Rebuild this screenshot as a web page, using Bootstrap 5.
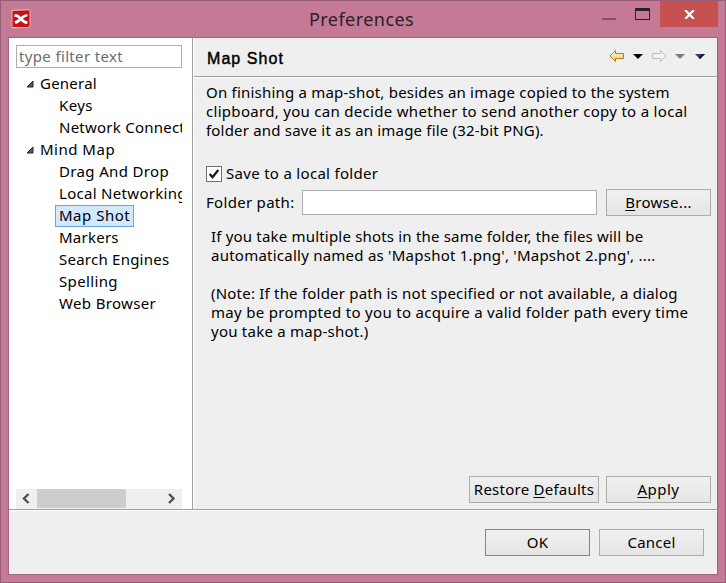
<!DOCTYPE html>
<html lang="en">
<head>
<meta charset="utf-8">
<meta name="viewport" content="width=device-width, initial-scale=1">
<title>Preferences</title>
<link rel="stylesheet" href="https://cdn.jsdelivr.net/npm/bootstrap@5.3.0/dist/css/bootstrap.min.css">
<style>
  body{font:15px/19px "Noto Sans","Open Sans",sans-serif;color:#000;letter-spacing:.24px}
  svg{display:block;flex:none}
  .window{width:726px;height:583px;background:#c47a96;border:1px solid #995c75;padding:0 7px 7px}
  .titlebar{height:36px}
  .app-icon{margin:8px 0 0 3px}
  .caption-text{font-size:18px;line-height:24px;letter-spacing:.45px;color:#2b2228;margin-top:6px;width:108px}
  .sys-buttons{width:125px}
  .close-btn{width:58px;height:26px;background:#c75050;border:0}
  .client{border:1px solid #a3637c;background:#efefef}
  .side{width:184px;background:#fff;border-right:1px solid #a0a0a0;padding:7px 10px 0 7px}
  .filter{height:23px;border:1px solid #abadb3;padding:0 2px;line-height:20px;letter-spacing:.35px;color:#6d6d6d;background:#fff}
  .tree{margin-top:5px}
  .node{height:22px;line-height:20px;white-space:nowrap}
  .node.branch{padding-bottom:2px}
  .twisty{margin:1px 6px 0 10px}
  .leaf{margin-left:39px;padding:0 3px;border:1px solid transparent;line-height:18px;height:22px}
  .leaf.current{background:#d1e8ff;border-color:#66a7e8}
  .scroller{height:20px;background:#efefef}
  .thumb{width:89px;height:19px;background:#cdcdcd}
  .pane{border-left:1px solid #fff}
  .pane-head{height:39px;border-bottom:1px solid #a0a0a0;box-shadow:0 1px #fff;padding:0 11px 0 13px}
  .pane-title{font:16px/20px "Liberation Sans",Arial,sans-serif;letter-spacing:1.05px;-webkit-text-stroke:.45px #000;padding-top:3px}
  .intro{padding:6px 0 0 12px}
  .line{display:block;white-space:nowrap;height:19px}
  .check-row{margin:24px 0 0 12px;height:19px;letter-spacing:.3px}
  .tick{width:16px;height:16px;border:1px solid #707070;background:#fff;margin-right:4px}
  .path-row{margin:6px 6px 0 12px;height:27px;letter-spacing:.3px}
  .path-input{height:25px;width:295px;border:1px solid #abadb3;background:#fff}
  .path-fields{gap:9px}
  .note{padding:11px 0 0 17px}
  .push{height:27px;width:105px;border:1px solid #acacac;background:linear-gradient(#f0f0f0,#e5e5e5);color:#000;font:inherit;letter-spacing:inherit;line-height:25px;padding:0;text-align:center;white-space:nowrap}
  .push.wide{width:130px}
  .push.primary-push{border-color:#3399ff}
  .pane-actions{gap:7px;margin:0 6px 6px 0}
  .footer-bar{height:65px;border-top:1px solid #a0a0a0;box-shadow:inset 0 1px #fff;padding:19px 13px 0 0;gap:9px}
  .s21{letter-spacing:.19px}.s24{letter-spacing:.21px}.s32{letter-spacing:.3px}.s35{letter-spacing:.35px}.s50{letter-spacing:.5px}
  u{text-underline-offset:2px;text-decoration-thickness:1px;text-decoration-skip-ink:none}
</style>
</head>
<body class="m-0 overflow-hidden">
<div class="window d-flex flex-column">
  <header class="titlebar d-flex justify-content-between align-items-start">
    <div class="sys-buttons">
      <svg class="app-icon" width="20" height="20" viewBox="0 0 20 20">
        <path d="M.5 1.500 2 .8 18 .3 19.500 1.200V17L18 18.500 3 19.500.8 19Z" fill="#e9b9b4"/>
        <path d="M1.500 2 18.500 1.300V17L17 18H1.500Z" fill="#bf1519"/>
        <path d="M3.500 5.500C6 4.500 8 5.800 10 8c2-1.700 4-2.800 6.500-2.700l-.2 2.200c-1.800.2-3.200 1-4.400 2.200 1.400 1.500 2.800 2.300 4.700 2.500l-.4 2.700c-2.600 0-4.600-1.200-6.400-3.200-1.600 1.600-3 2.700-5.300 3.200l-1-2.700c1.700-.4 3.200-1.200 4.400-2.400C6.700 8.300 5.500 7.800 3.500 8Z" fill="#fff"/>
      </svg>
    </div>
    <div class="caption-text text-nowrap">Preferences</div>
    <div class="sys-buttons d-flex justify-content-end">
      <svg width="58" height="26" viewBox="0 0 58 26" shape-rendering="crispEdges">
        <path d="M0 17h14v2H0z" fill="#84506a"/>
        <path d="M33 7h15v12H33zM34 10v8h13v-8z" fill="#2b2228" fill-rule="evenodd"/>
      </svg>
      <button class="close-btn d-flex justify-content-center align-items-center p-0" aria-label="Close">
        <svg width="11" height="9" viewBox="0 0 11 9"><path d="M1.200 0 9.800 9M9.800 0 1.200 9" stroke="#fff" stroke-width="2.200"/></svg>
      </button>
    </div>
  </header>

  <main class="client flex-grow-1 d-flex flex-column">
    <div class="d-flex flex-grow-1">
      <aside class="side d-flex flex-column flex-shrink-0">
        <div class="filter">type filter text</div>
        <div class="tree flex-grow-1 overflow-hidden">
          <div class="node branch d-flex align-items-center"><svg class="twisty" width="8" height="8"><path d="M7 1v6H1z" fill="#595959" stroke="#262626"/></svg>General</div>
          <div class="node d-flex"><span class="leaf s35">Keys</span></div>
          <div class="node d-flex"><span class="leaf">Network Connections</span></div>
          <div class="node branch d-flex align-items-center s50"><svg class="twisty" width="8" height="8"><path d="M7 1v6H1z" fill="#595959" stroke="#262626"/></svg>Mind Map</div>
          <div class="node d-flex"><span class="leaf s35">Drag And Drop</span></div>
          <div class="node d-flex"><span class="leaf s32">Local Networking</span></div>
          <div class="node d-flex"><span class="leaf current s50">Map Shot</span></div>
          <div class="node d-flex"><span class="leaf">Markers</span></div>
          <div class="node d-flex"><span class="leaf">Search Engines</span></div>
          <div class="node d-flex"><span class="leaf s35">Spelling</span></div>
          <div class="node d-flex"><span class="leaf s35">Web Browser</span></div>
        </div>
        <div class="scroller d-flex">
          <svg width="21" height="20"><path d="M12.500 5 8 9.500l4.500 4.500" fill="none" stroke="#505050" stroke-width="2.400"/></svg>
          <div class="thumb"></div>
          <svg class="ms-auto" width="21" height="20"><path d="M8 5l4.500 4.500L8 14" fill="none" stroke="#505050" stroke-width="2.400"/></svg>
        </div>
      </aside>

      <section class="pane flex-grow-1 d-flex flex-column">
        <div class="pane-head d-flex align-items-center justify-content-between">
          <div class="pane-title">Map Shot</div>
          <svg width="98" height="14" viewBox="0 0 98 14">
            <defs>
              <linearGradient id="gold" x2="0" y2="1"><stop stop-color="#fffbe0"/><stop offset="1" stop-color="#f5c75a"/></linearGradient>
            </defs>
            <path d="M2 6 7.500.5V3.500H15.500V8.500H7.500V11.500Z" fill="url(#gold)" stroke="#b87a14"/>
            <path d="M25 4h10l-5 5z" fill="#000"/>
            <path d="M58 6 52.500.5V3.500H44.500V8.500H52.500V11.500Z" fill="#f2f2ee" stroke="#bdbdb9"/>
            <path d="M67 4h10l-5 5z" fill="#7d7d7d"/>
            <path d="M87 4h10l-5 5z" fill="#3e3277"/><path d="M92 9l5-5h-3l-3.500 3.500z" fill="#17172b"/>
          </svg>
        </div>
        <div class="intro">
          <span class="line s24">On finishing a map-shot, besides an image copied to the system</span>
          <span class="line s32">clipboard, you can decide whether to send another copy to a local</span>
          <span class="line s21">folder and save it as an image file (32-bit PNG).</span>
        </div>
        <label class="check-row d-flex align-items-center">
          <span class="tick"><svg width="14" height="14"><path d="M2.700 7 5.500 10.300 11.300 3" fill="none" stroke="#1c1c1c" stroke-width="2.300"/></svg></span>Save to a local folder
        </label>
        <div class="path-row d-flex align-items-center justify-content-between">
          <span>Folder path:</span>
          <div class="path-fields d-flex align-items-center">
            <div class="path-input"></div>
            <button class="push"><u>B</u>rowse...</button>
          </div>
        </div>
        <div class="note">
          <span class="line s21">If you take multiple shots in the same folder, the files will be</span>
          <span class="line">automatically named as 'Mapshot 1.png', 'Mapshot 2.png', ....</span>
          <span class="line">&nbsp;</span>
          <span class="line s24">(Note: If the folder path is not specified or not available, a dialog</span>
          <span class="line s32">may be prompted to you to acquire a valid folder path every time</span>
          <span class="line">you take a map-shot.)</span>
        </div>
        <div class="pane-actions d-flex justify-content-end mt-auto">
          <button class="push wide">Restore <u>D</u>efaults</button>
          <button class="push s50"><u>A</u>pply</button>
        </div>
      </section>
    </div>
    <footer class="footer-bar d-flex justify-content-end">
      <button class="push primary-push">OK</button>
      <button class="push">Cancel</button>
    </footer>
  </main>
</div>
<script src="https://cdn.jsdelivr.net/npm/bootstrap@5.3.0/dist/js/bootstrap.bundle.min.js"></script>
</body>
</html>
